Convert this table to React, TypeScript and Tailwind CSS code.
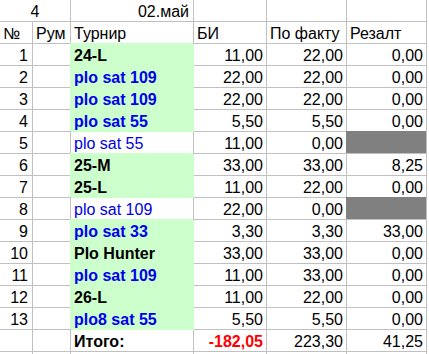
import React from 'react';

type Kind = 'black' | 'blue' | 'plain';

const rows: { n: number; name: string; kind: Kind; green: boolean; bi: string; fact: string; res: string | null }[] = [
  { n: 1, name: '24-L', kind: 'black', green: true, bi: '11,00', fact: '22,00', res: '0,00' },
  { n: 2, name: 'plo sat 109', kind: 'blue', green: true, bi: '22,00', fact: '22,00', res: '0,00' },
  { n: 3, name: 'plo sat 109', kind: 'blue', green: true, bi: '22,00', fact: '22,00', res: '0,00' },
  { n: 4, name: 'plo sat 55', kind: 'blue', green: true, bi: '5,50', fact: '5,50', res: '0,00' },
  { n: 5, name: 'plo sat 55', kind: 'plain', green: false, bi: '11,00', fact: '0,00', res: null },
  { n: 6, name: '25-M', kind: 'black', green: true, bi: '33,00', fact: '33,00', res: '8,25' },
  { n: 7, name: '25-L', kind: 'black', green: true, bi: '11,00', fact: '22,00', res: '0,00' },
  { n: 8, name: 'plo sat 109', kind: 'plain', green: false, bi: '22,00', fact: '0,00', res: null },
  { n: 9, name: 'plo sat 33', kind: 'blue', green: true, bi: '3,30', fact: '3,30', res: '33,00' },
  { n: 10, name: 'Plo Hunter', kind: 'black', green: true, bi: '33,00', fact: '33,00', res: '0,00' },
  { n: 11, name: 'plo sat 109', kind: 'blue', green: true, bi: '11,00', fact: '33,00', res: '0,00' },
  { n: 12, name: '26-L', kind: 'black', green: true, bi: '11,00', fact: '22,00', res: '0,00' },
  { n: 13, name: 'plo8 sat 55', kind: 'blue', green: true, bi: '5,50', fact: '5,50', res: '0,00' },
];

const cell = 'h-[22px] border-r border-b border-[#c0c0c0] px-[3px] pt-px leading-[21px] whitespace-nowrap overflow-hidden';
const num = cell + ' text-right';

const kindClass: Record<Kind, string> = {
  black: 'font-bold text-black',
  blue: 'font-bold text-[#0000ee]',
  plain: 'text-[#0000dd]',
};

export default function App() {
  return (
    <div className="w-[429px] h-[354px] bg-white overflow-hidden text-[16px] text-black font-['Liberation_Sans',Arial,sans-serif]">
      <div className="grid grid-cols-[33px_38px_123px_73px_80px_80px]">
        {/* top row */}
        <div className={cell + ' col-span-2 text-center'}>4</div>
        <div className={num + ' pr-[4px]'}>02.май</div>
        <div className={cell} />
        <div className={cell} />
        <div className={cell} />

        {/* header */}
        <div className={cell}>№</div>
        <div className={cell}>Рум</div>
        <div className={cell}>Турнир</div>
        <div className={cell}>БИ</div>
        <div className={cell}>По факту</div>
        <div className={cell}>Резалт</div>

        {rows.map((r) => (
          <React.Fragment key={r.n}>
            <div className={num + ' pr-[4px]'}>{r.n}</div>
            <div className={cell} />
            <div
              className={
                cell +
                ' ' +
                kindClass[r.kind] +
                (r.green ? ' bg-[#ccffcc] border-[#ccffcc] shadow-[-1px_-1px_0_#ccffcc]' : '')
              }
            >
              {r.name}
            </div>
            <div className={num}>{r.bi}</div>
            <div className={num}>{r.fact}</div>
            {r.res === null ? (
              <div className={cell + ' bg-[#808080] border-[#808080] shadow-[-1px_-1px_0_#808080]'} />
            ) : (
              <div className={num}>{r.res}</div>
            )}
          </React.Fragment>
        ))}

        {/* total */}
        <div className={cell} />
        <div className={cell} />
        <div className={cell + ' font-bold'}>Итого:</div>
        <div className={num + ' font-bold text-[#ff0000]'}>-182,05</div>
        <div className={num}>223,30</div>
        <div className={num}>41,25</div>

        {/* partial row */}
        <div className={cell} />
        <div className={cell} />
        <div className={cell} />
        <div className={cell} />
        <div className={cell} />
        <div className={cell} />
      </div>
    </div>
  );
}
